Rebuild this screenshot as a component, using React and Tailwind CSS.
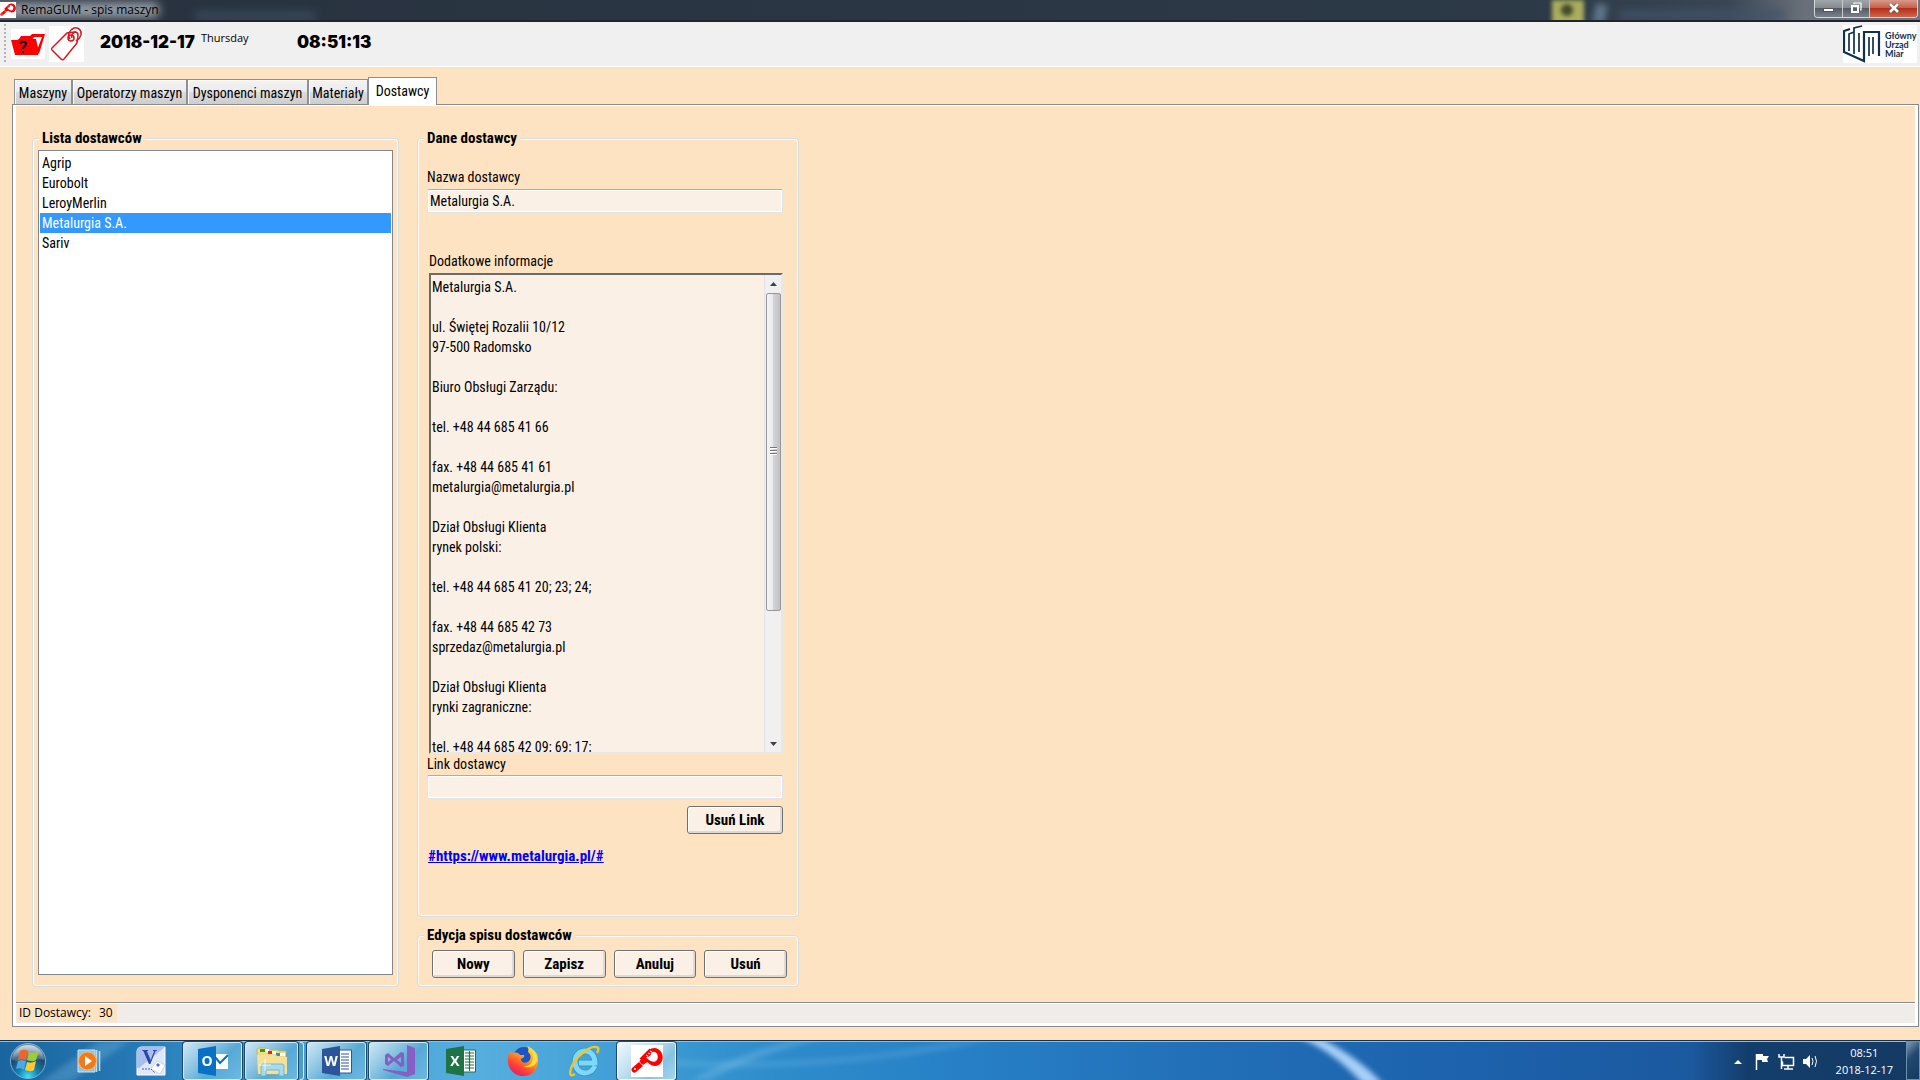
import React from 'react';

const SUPPLIERS = ['Agrip', 'Eurobolt', 'LeroyMerlin', 'Metalurgia S.A.', 'Sariv'];

const INFO = `Metalurgia S.A.

ul. Świętej Rozalii 10/12
97-500 Radomsko

Biuro Obsługi Zarządu:

tel. +48 44 685 41 66

fax. +48 44 685 41 61
metalurgia@metalurgia.pl

Dział Obsługi Klienta
rynek polski:

tel. +48 44 685 41 20; 23; 24;

fax. +48 44 685 42 73
sprzedaz@metalurgia.pl

Dział Obsługi Klienta
rynki zagraniczne:

tel. +48 44 685 42 09; 69; 17;`;

function AppIcon({ className }) {
  return (
    <svg viewBox="0 0 32 32" className={className} aria-hidden="true">
      <rect width="32" height="32" fill="#fff" />
      <path d="m1 23 7-6 4 4-7 6c-2 2-6-1-4-4Z" fill="#f00" />
      <path d="m10 15 2 3M12 12l4 5" stroke="#f00" strokeWidth="4" />
      <path d="M10 15 20 5" stroke="#f00" strokeWidth="4" />
      <path d="M18 5c2-2 6-3 9-1 4 2 6 8 4 12-2 5-7 6-11 4l-4-3-4 3-3-4 4-4 4 2c3 3 7 4 9 1 2-4 0-8-3-8-3-1-4 1-3 3l-3 2Z" fill="#f00" />
      <path d="m15 10 2 1m0-3 2 1m0-3 2 1" stroke="#fff" strokeWidth="1" />
      <circle cx="4" cy="24" r="1" fill="#fff" />
    </svg>
  );
}

function FolderIcon() {
  return (
    <svg viewBox="0 0 34 30" className="h-[30px] w-[34px]" aria-hidden="true">
      <rect width="34" height="30" fill="#fff" />
      <path d="M8 10 10 7h9l2-2h13l-6 20-2-4 5-13h-8l-2 3Z" fill="#f00" />
      <path d="M0 11h6l2-1h17l3 13-1 3H4Z" fill="#f00" />
      <path d="M9.500 15c0-3 5.500-3 5.500 0 0 2-3 2-3 5m0 2v2" fill="none" stroke="#000" strokeWidth="2" />
    </svg>
  );
}

function TagIcon() {
  return (
    <svg viewBox="0 0 35 36" className="h-9 w-[35px]" aria-hidden="true">
      <rect width="35" height="36" fill="#fff" />
      <g fill="none" stroke="#e0141c" strokeWidth="1.500">
        <path d="M3 22 18 7l8-1c2 0 3 1 3 3l-1 8-13 16c-1 1-2 1-3 0L3 24c-1-1-1-1 0-2Z" />
        <circle cx="22" cy="12" r="3" />
        <path d="M21 13c-3-4-1-9 4-11 5-1 8 3 7 7-1 3-3 5-5 6M23 12c-1-3 1-6 4-6" />
      </g>
    </svg>
  );
}

function OfficeLogo() {
  return (
    <div className="flex h-[38px] w-[74px] items-center bg-white text-[#12304e]">
      <svg viewBox="0 0 38 38" className="h-[38px] w-[38px] shrink-0" fill="none" stroke="currentColor" aria-hidden="true">
        <path d="M7 4 1 6v21l20 9V7h15v24" strokeWidth="2.200" />
        <path d="M6 26V9l5-2v22M11 28V3l8-2M16 27V8M26 12v19M30 12v17" strokeWidth="1.700" />
      </svg>
      <p className="ml-1 font-['Lato',sans-serif] text-[9px] leading-[9px] font-bold">
        Główny<br />Urząd<br />Miar
      </p>
    </div>
  );
}

function TitleBar() {
  return (
    <header className="relative flex h-[22px] items-center overflow-hidden border-b-2 border-[#20242c] bg-[linear-gradient(90deg,#28323f_0%,#2c3947_80%,#3a4654_90%,#69707a_94%,#6c7480_100%)]">
      <div className="absolute -left-4 top-[2px] h-4 w-[176px] rounded-full bg-[#9299a2] blur-[5px]" />
      <div className="absolute left-[195px] top-3 h-2 w-[120px] bg-[#3c4b5c] blur-[4px]" />
      <div className="absolute right-[336px] top-0 h-6 w-8 bg-[#a9ad5c] blur-[2px]" />
      <div className="absolute right-[347px] top-1 h-3 w-3 rounded-full bg-[#42492f] blur-[2px]" />
      <div className="absolute right-[314px] top-1 h-5 w-3 rotate-12 bg-[#5d7387] blur-[3px]" />
      <div className="absolute right-[136px] top-[11px] h-2 w-[165px] bg-[#41536a] blur-[4px]" />
      <AppIcon className="relative h-4 w-4" />
      <h1 className="relative ml-[5px] font-['Open_Sans',sans-serif] text-[12px] leading-5 text-black">RemaGUM - spis maszyn</h1>
      <div className="relative mr-[2px] mb-[3px] ml-auto flex h-[18px] overflow-hidden rounded-b-[4px] border border-t-0 border-[#d4d7da]">
        <button aria-label="Minimalizuj" className="flex w-[28px] items-end justify-center border-r border-[#c5c9ce] bg-[linear-gradient(#a0a5ab_0%,#858b92_45%,#555c66_50%,#7a818b_100%)] pb-[5px]">
          <span className="h-1 w-[11px] border border-[#555] bg-white" />
        </button>
        <button aria-label="Przywróć" className="flex w-[27px] items-center justify-center border-r border-[#c5c9ce] bg-[linear-gradient(#a0a5ab_0%,#858b92_45%,#555c66_50%,#7a818b_100%)]">
          <svg viewBox="0 0 12 12" className="h-3 w-3" fill="none" stroke="#fff" strokeWidth="2" aria-hidden="true">
            <path d="M4 2V1h7v7h-1" strokeWidth="1.200" />
            <path d="M2 4h6v6H2Z" />
          </svg>
        </button>
        <button aria-label="Zamknij" className="flex w-[47px] items-center justify-center bg-[linear-gradient(#d69a8d_0%,#c9614c_45%,#b5301a_50%,#d0644a_100%)]">
          <svg viewBox="0 0 12 10" className="h-[10px] w-3" aria-hidden="true">
            <path d="m2 1 8 8m0-8L2 9" stroke="#555" strokeWidth="4" />
            <path d="m2 1 8 8m0-8L2 9" stroke="#fff" strokeWidth="2.600" />
          </svg>
        </button>
      </div>
    </header>
  );
}

function Toolbar() {
  return (
    <div className="flex h-[45px] items-start border-b border-white bg-[#f0f0f0] pr-[3px] pl-1">
      <div className="mt-[2px] h-[38px] w-[2px] bg-[repeating-linear-gradient(#b4b4b4_0_2px,transparent_2px_4px)]" />
      <button aria-label="Otwórz" className="mt-[7px] ml-[5px]"><FolderIcon /></button>
      <button aria-label="Etykiety" className="mt-1 ml-1"><TagIcon /></button>
      <time className="mt-2 ml-4 font-['Inter',sans-serif] text-[17px] leading-6 font-black">2018-12-17</time>
      <span className="mt-[7px] ml-[6px] w-24 font-['Open_Sans',sans-serif] text-[11px] leading-[18px]">Thursday</span>
      <time className="mt-2 font-['Inter',sans-serif] text-[17px] leading-6 font-black">08:51:13</time>
      <div className="mt-[3px] ml-auto"><OfficeLogo /></div>
    </div>
  );
}

const TABS = [
  ['Maszyny', 'w-[58px]'],
  ['Operatorzy maszyn', 'w-[115px]'],
  ['Dysponenci maszyn', 'w-[121px]'],
  ['Materiały', 'w-[60px]'],
];

function Tabs() {
  return (
    <div role="tablist" className="relative z-10 -mb-px flex items-end pl-[14px]">
      {TABS.map(([name, width]) => (
        <button
          key={name}
          role="tab"
          aria-selected="false"
          className={`mb-px h-[25px] border border-b-0 border-[#8c8f94] bg-[linear-gradient(#f3f3f3,#ebebeb_48%,#dcdcdc_52%,#cdcdcd)] pt-[2px] whitespace-nowrap shadow-[inset_1px_1px_0_#fafafa] ${width}`}
        >
          {name}
        </button>
      ))}
      <button role="tab" aria-selected="true" className="h-[28px] w-[69px] border border-b-0 border-[#8c8f94] bg-white pb-[2px]">
        Dostawcy
      </button>
    </div>
  );
}

function Group({ title, className, children }) {
  return (
    <fieldset className={`rounded-[4px] border border-[#d3dde4] shadow-[inset_0_0_0_1px_#fffaf3] ${className}`}>
      <legend className="bg-[#fee3c3] px-[3px] text-[15px] leading-5 font-bold">{title}</legend>
      {children}
    </fieldset>
  );
}

function PushButton({ className, children }) {
  return (
    <button className={`h-7 rounded-[3px] border border-[#707070] bg-[#fbf0e6] text-[15px] leading-5 font-bold shadow-[inset_1px_1px_0_#fff,inset_-2px_-2px_0_#dcdad8] ${className}`}>
      {children}
    </button>
  );
}

const FIELD = 'h-6 rounded-[2px] border border-[#dfe3ea] border-t-[#abadb3] bg-[#fbf0e6] px-[2px] leading-5 shadow-[inset_0_0_0_1px_#fff]';

function SupplierForm() {
  return (
    <Group title="Dane dostawcy" className="flex flex-1 flex-col pt-[19px] pr-[15px] pb-[50px] pl-[9px] *:[legend]:-ml-[3px]">
      <label htmlFor="name" className="leading-5">Nazwa dostawcy</label>
      <input id="name" defaultValue="Metalurgia S.A." className={`mt-[2px] ${FIELD}`} />
      <label htmlFor="info" className="mt-[38px] pl-[2px] leading-5">Dodatkowe informacje</label>
      <div className="mt-[2px] ml-[2px] flex min-h-[320px] flex-1 border-2 border-[#e8e8e8] border-t-[#6b6b6b] border-l-[#6b6b6b] bg-[#fbf0e6]">
        <textarea id="info" defaultValue={INFO} className="min-w-0 flex-1 resize-none overflow-hidden bg-transparent px-px pt-[2px] leading-5" />
        <div className="flex w-[17px] flex-col items-center border-l border-[#e3e3e3] bg-[#f0f0f0]">
          <svg viewBox="0 0 7 4" className="mt-[7px] mb-[7px] h-1 w-[7px]" aria-hidden="true"><path d="M0 4 3.500 0 7 4Z" fill="#404040" /></svg>
          <div className="flex w-[15px] flex-[315] items-center justify-center rounded-[2px] border border-[#979797] bg-[linear-gradient(90deg,#f5f5f5,#e9e9eb_45%,#d3d4d6_50%,#bfc0c3)]">
            <div className="h-[9px] w-[7px] bg-[repeating-linear-gradient(#777_0_1px,#fff_1px_2px,transparent_2px_3px)]" />
          </div>
          <div className="flex-[127]" />
          <svg viewBox="0 0 7 4" className="mt-1 mb-[6px] h-1 w-[7px]" aria-hidden="true"><path d="M0 0h7L3.500 4Z" fill="#404040" /></svg>
        </div>
      </div>
      <label htmlFor="link" className="leading-5">Link dostawcy</label>
      <input id="link" className={`mt-px ${FIELD}`} />
      <PushButton className="mt-[7px] w-24 self-end">Usuń Link</PushButton>
      <a href="https://www.metalurgia.pl/" className="mt-3 ml-px self-start text-[15px] leading-5 font-bold text-[#0000ff] underline">
        #https://www.metalurgia.pl/#
      </a>
    </Group>
  );
}

/* Taskbar icons */

function StartOrb() {
  return (
    <svg viewBox="0 0 38 38" className="h-[38px] w-[38px]" aria-hidden="true">
      <defs>
        <radialGradient id="orb" cx="50%" cy="95%" r="85%">
          <stop offset="0" stopColor="#3fe0ff" /><stop offset=".35" stopColor="#1582b4" /><stop offset=".75" stopColor="#1a4668" /><stop offset="1" stopColor="#6c8ea6" />
        </radialGradient>
        <linearGradient id="gloss" x1="0" y1="0" x2="0" y2="1">
          <stop offset="0" stopColor="#fff" stopOpacity=".65" /><stop offset="1" stopColor="#fff" stopOpacity=".12" />
        </linearGradient>
      </defs>
      <circle cx="19" cy="19" r="17.500" fill="url(#orb)" stroke="#7fb0cf" />
      <path d="M3 18a16 15 0 0 1 32 0c-10-3-22 4-32 0Z" fill="url(#gloss)" />
      <path d="M11 9c3-2 6-1 8 0l-2 9c-3-1-5-1-8 0Z" fill="#f0642a" />
      <path d="M20 10c3 1 6 1 10-1l-3 9c-3 2-6 1-9 0Z" fill="#9ccb3c" />
      <path d="M9 19c3-1 5-1 8 0l-2 9c-3-2-5-2-8-1Z" fill="#4ba9e8" />
      <path d="M18 20c3 1 5 1 9-1l-2 9c-3 2-6 1-9 0Z" fill="#fdc92f" />
    </svg>
  );
}

function MediaIcon() {
  return (
    <svg viewBox="0 0 28 26" className="h-[26px] w-7" aria-hidden="true">
      <path d="M3 2h17v22H3Z" fill="#8ec4e0" stroke="#c7e4f1" />
      <path d="M21.500 2v22M24.500 3v20" stroke="#b7dced" strokeWidth="1.600" />
      <circle cx="12.500" cy="13" r="9" fill="#f07a1c" stroke="#fbb571" />
      <path d="m10 8 7 5-7 5Z" fill="#fff" />
    </svg>
  );
}

function VisioIcon() {
  return (
    <svg viewBox="0 0 30 30" className="h-[30px] w-[30px]" aria-hidden="true">
      <path d="M1 6q0-5 5-5h23v28H1Z" fill="#dfe7fa" stroke="#fff" />
      <path d="M1 6q0-5 5-5h23L3 22H1Z" fill="#a9bdf0" />
      <text x="6" y="18" fontFamily="Liberation Serif" fontWeight="bold" fontSize="21" fill="#2747a8">V</text>
      <path d="m21 15 8 4-5 9-9-5Z" fill="#fff" stroke="#b5bfdc" strokeWidth=".6" />
      <path d="m22 17 2 2-2 2-2-2Z" fill="#4a6cd0" />
      <path d="M6 23h9l4 4" fill="none" stroke="#4b5fa5" strokeDasharray="2 1" />
    </svg>
  );
}

function OfficeIcon({ letter, color, children }) {
  return (
    <svg viewBox="0 0 30 30" className="h-[30px] w-[30px]" aria-hidden="true">
      {children}
      <path d="M0 3 18 0v30L0 27Z" fill={color} />
      <text x="9" y="20" textAnchor="middle" fontFamily="Open Sans" fontWeight="bold" fontSize="14" fill="#fff">{letter}</text>
    </svg>
  );
}

function ExplorerIcon() {
  return (
    <svg viewBox="0 0 32 30" className="h-[30px] w-8" aria-hidden="true">
      <path d="M1 4q0-2 2-2h6l2 2h10l2 1h7v23H2Z" fill="#f1dc85" stroke="#c9a94b" strokeWidth=".7" />
      <path d="M4 3h5v3H4Z" fill="#1da52b" /><path d="M9 3h4v3H9Z" fill="#fff" />
      <path d="M12 5h4v3h-4Z" fill="#d8291f" /><path d="M16 5h4v3h-4Z" fill="#fff" />
      <path d="M20 7h4v3h-4Z" fill="#2790e0" /><path d="M24 7h5v3h-5Z" fill="#fff" />
      <path d="M1 9h19l2 2h9v17H2Z" fill="#f3e19a" />
      <path d="M5 30V20q0-2 2-2h19q2 0 2 2v10h-5v-6H10v6Z" fill="#a5dbee" stroke="#62adcd" strokeWidth=".8" />
      <path d="M9 13v12M3 19h12" stroke="#fff" strokeWidth="1" opacity=".8" />
    </svg>
  );
}

function VisualStudioIcon() {
  return (
    <svg viewBox="0 0 32 32" className="h-8 w-8" fill="#865fc5" aria-hidden="true">
      <path d="m24 0 8 3v26l-8 3L0 25v-1l24 3Z" />
      <path fillRule="evenodd" d="M2 10 5 8l6 5 7-6 3 1v13l-3 1-7-6-6 5-3-2Zm3 2v5l3-2.500Zm13 0-4 3 4 3Z" />
    </svg>
  );
}

function FirefoxIcon() {
  return (
    <svg viewBox="0 0 32 32" className="h-8 w-8" aria-hidden="true">
      <defs>
        <linearGradient id="fox" x1="0.8" y1="0" x2="0.2" y2="1">
          <stop offset="0" stopColor="#fff04a" /><stop offset=".4" stopColor="#ff9a1f" /><stop offset=".7" stopColor="#ff4338" /><stop offset="1" stopColor="#e0186c" />
        </linearGradient>
      </defs>
      <circle cx="17" cy="13" r="11" fill="#1d55c4" />
      <path d="M3 6c1 1 2 2 3 2 3-1 6 0 7 2h4c1 2-1 3-3 4 0 3 3 5 7 3 4-3 3-8 0-10 1-3 0-5-1-6 6 3 8 5 10 8 3 8 0 22-14 22C4 31-3 18 3 6Z" fill="url(#fox)" />
      <path d="M21 1c4 3 6 7 5 13-1 5-5 8-10 7 6 3 12 0 14-5 1-6-4-10-9-15Z" fill="#ffdf3b" />
    </svg>
  );
}

function ExplorerEIcon() {
  return (
    <svg viewBox="0 0 32 32" className="h-8 w-8" fill="none" aria-hidden="true">
      <path d="M26 21c-2 4-5 7-10 7-6 0-10-5-10-11S10 6 16 6c6 0 10 5 10 12H10" stroke="#2b93cf" strokeWidth="6.500" />
      <path d="M26 21c-2 4-5 7-10 7-6 0-10-5-10-11S10 6 16 6c6 0 10 5 10 12H10" stroke="#7fd8f8" strokeWidth="5" />
      <path d="M6 29c-6 4-6-2-2-10C9 10 21 1 27 2c3 0 3 3 1 6" stroke="#f4c51c" strokeWidth="2.400" />
    </svg>
  );
}

const RUNNING = 'rounded-[3px] border border-[#cfe9f7] shadow-[0_0_0_1px_#1c4a6b] bg-[linear-gradient(135deg,#cfe7f4_0%,#8cc5e3_35%,#57a9d6_60%,#6bb9e2_100%)]';

function TaskButton({ label, running, active, children }) {
  const look = active
    ? 'rounded-[3px] border border-[#f0f9ff] shadow-[0_0_0_1px_#1c4a6b] bg-[linear-gradient(135deg,#f0f8fd_0%,#bfdff0_40%,#86c3e2_70%,#a4d5ee_100%)]'
    : running
      ? RUNNING
      : '';
  return (
    <button aria-label={label} className={`flex h-[38px] w-[59px] items-center justify-center ${look}`}>
      {children}
    </button>
  );
}

function Taskbar() {
  return (
    <footer className="relative flex h-10 items-center overflow-hidden border-t border-[#16314a] bg-[linear-gradient(90deg,#1a659f_0%,#2579b5_7%,#3e9bd3_14%,#56aede_25%,#3c9bd3_34%,#2f8dcb_40%,#2780c6_50%,#2270b8_62%,#1d63ae_75%,#1b599f_88%,#133e6c_91%,#143a63_100%)] shadow-[inset_0_1px_0_#8fc0dd] font-['Open_Sans',sans-serif]">
      <svg viewBox="0 0 1920 40" preserveAspectRatio="none" className="absolute inset-0 h-full w-full" aria-hidden="true">
        <defs><filter id="soft" x="-20%" y="-20%" width="140%" height="140%"><feGaussianBlur stdDeviation="3" /></filter></defs>
        <g filter="url(#soft)">
          <path d="M1298-4h20q40 20 65 48h-20q-30-34-65-48Z" fill="#a9d0f8" />
          <path d="M690 40q60-34 120-44h18q-60 14-120 44Z" fill="#8cc8ee" opacity=".3" />
          <path d="M672 18q140 10 280-18h40q-160 34-320 26Z" fill="#8cc8ee" opacity=".2" />
          <path d="M40 42 100 0h30L70 42Z" fill="#9bd0ec" opacity=".25" />
        </g>
      </svg>
      <div className="relative flex items-center gap-[3px]">
        <button aria-label="Start" className="flex w-14 justify-center pr-px"><StartOrb /></button>
        <TaskButton label="Windows Media Player"><MediaIcon /></TaskButton>
        <TaskButton label="Visio"><VisioIcon /></TaskButton>
        <TaskButton label="Outlook" running>
          <OfficeIcon letter="O" color="#0a70c4">
            <path d="M17 8h13v15H17Z" fill="#fff" /><path d="m17 11 5 6 8-8" fill="none" stroke="#0a70c4" strokeWidth="2" />
          </OfficeIcon>
        </TaskButton>
        <div className="flex gap-[2px]">
          <button aria-label="Eksplorator Windows" className={`flex h-[38px] w-[53px] items-center justify-center ${RUNNING}`}><ExplorerIcon /></button>
          <span className="h-[38px] w-1 rounded-r-[3px] border border-l-0 border-[#cfe9f7] bg-[#4d9dc9]" />
        </div>
        <TaskButton label="Word" running>
          <OfficeIcon letter="W" color="#2a5699">
            <path d="M17 4h12.500v23H17Z" fill="#fff" stroke="#2a5699" /><path d="M19 8h8m-8 3h8m-8 3h8m-8 3h8m-8 3h8m-8 3h8" stroke="#2a5699" />
          </OfficeIcon>
        </TaskButton>
        <TaskButton label="Visual Studio" running><VisualStudioIcon /></TaskButton>
        <TaskButton label="Excel">
          <OfficeIcon letter="X" color="#207346">
            <path d="M17 4h12.500v22H17Z" fill="#fff" stroke="#207346" /><path d="M19 7h9m-9 3h9m-9 3h9m-9 3h9m-9 3h9m-9 3h9M23.500 5v20" stroke="#207346" strokeWidth="1.200" />
          </OfficeIcon>
        </TaskButton>
        <TaskButton label="Firefox"><FirefoxIcon /></TaskButton>
        <TaskButton label="Internet Explorer"><ExplorerEIcon /></TaskButton>
        <TaskButton label="RemaGUM" active><AppIcon className="h-8 w-8" /></TaskButton>
      </div>
      <div className="relative ml-auto flex h-full items-center text-white">
        <svg viewBox="0 0 90 20" className="h-5 w-[90px]" aria-hidden="true">
          <path d="m4 13 4-4 4 4Z" fill="#fff" />
          <path d="M26.500 3v16" stroke="#fff" strokeWidth="1.500" />
          <path d="M27 3h6v2h6l-2 3 1 3h-6V9h-5Z" fill="#fff" />
          <path d="M54.500 6.500h9v8h-11v-4" fill="none" stroke="#fff" strokeWidth="1.500" />
          <path d="M49 3v3h5V3M51.500 6v12M58 15v3m-4 0h9" fill="none" stroke="#fff" strokeWidth="1.500" />
          <path d="M73 8h3l4-4v13l-4-4h-3Z" fill="#fff" />
          <path d="M82 7q2 3 0 7m3-9q3 5 0 11" fill="none" stroke="#fff" />
        </svg>
        <div className="mr-[13px] ml-4 text-center text-[11px] leading-[17px]">
          <div>08:51</div>
          <div>2018-12-17</div>
        </div>
        <button aria-label="Pokaż pulpit" className="h-full w-[14px] border border-[#6d8fae] bg-[linear-gradient(135deg,#7f9cb8_0%,#24486e_40%,#143a63_100%)]" />
      </div>
    </footer>
  );
}

export default function App() {
  return (
    <div className="flex min-h-screen flex-col bg-[#fee3c3] font-['Roboto_Condensed','Roboto','Liberation_Sans',sans-serif] text-[14px] leading-5 text-black">
      <TitleBar />
      <Toolbar />
      <main className="flex flex-1 flex-col pt-[10px] pb-[13px]">
        <Tabs />
        <div role="tabpanel" aria-label="Dostawcy" className="mr-px ml-3 flex flex-1 flex-col border border-[#868b92] bg-white px-[3px] pt-px pb-[2px]">
          <div className="flex flex-1 flex-col bg-[#fee3c3]">
            <div className="flex flex-1 gap-[18px] px-4 pt-[22px] pb-[15px]">
              <Group title="Lista dostawców" className="flex w-[367px] flex-col px-[5px] pt-[2px] pb-[11px] *:[legend]:ml-px">
                <select
                  size={5}
                  aria-label="Lista dostawców"
                  defaultValue="Metalurgia S.A."
                  className="w-full flex-1 appearance-none overflow-hidden border border-[#828790] bg-white px-px pt-[2px]"
                >
                  {SUPPLIERS.map((s) => (
                    <option key={s} className="h-5 min-h-5 px-[2px] pt-[2px] pb-0 leading-[18px] checked:bg-[linear-gradient(#3399ff,#3399ff)] checked:text-white">{s}</option>
                  ))}
                </select>
              </Group>
              <div className="flex w-[382px] flex-col gap-2">
                <SupplierForm />
                <Group title="Edycja spisu dostawców" className="pt-[5px] pr-[11px] pb-2 pl-[9px] *:[legend]:-ml-[3px]">
                  <div className="ml-[5px] flex gap-2">
                    <PushButton className="flex-1">Nowy</PushButton>
                    <PushButton className="flex-1">Zapisz</PushButton>
                    <PushButton className="flex-1">Anuluj</PushButton>
                    <PushButton className="flex-1">Usuń</PushButton>
                  </div>
                </Group>
              </div>
            </div>
            <div className="flex h-[22px] items-center border-t border-b border-t-[#8c8c8c] border-b-white bg-[#f0ecea] pl-px font-['Open_Sans',sans-serif] text-[12px] shadow-[inset_0_1px_0_#fff]">
              <div className="flex h-[18px] items-center gap-2 bg-[#fee3c3] pr-1 pl-[2px]">
                <span>ID Dostawcy:</span>
                <span>30</span>
              </div>
            </div>
          </div>
        </div>
      </main>
      <Taskbar />
    </div>
  );
}
